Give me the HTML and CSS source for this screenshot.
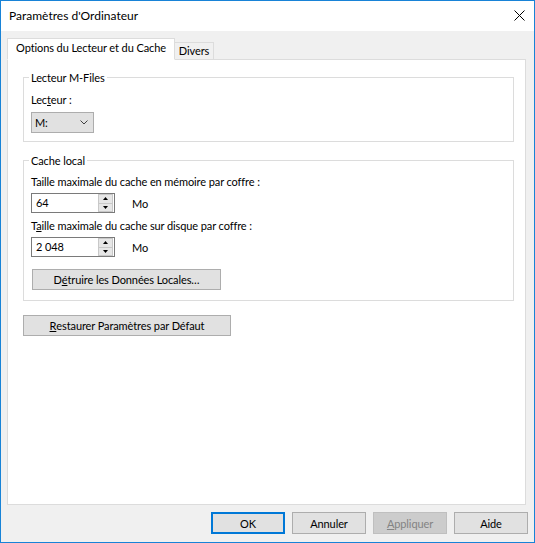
FILE: index.html
```html
<!DOCTYPE html>
<html lang="fr">
<head>
<meta charset="utf-8">
<title>Paramètres d'Ordinateur</title>
<link rel="stylesheet" href="styles.css">
</head>
<body>
<div class="window">
  <div class="titlebar">
    <span class="title">Paramètres d'Ordinateur</span>
    <svg class="close" width="11" height="11" viewBox="0 0 11 11"><path d="M0.5 0.5L10.5 10.5M10.5 0.5L0.5 10.5" stroke="#000" stroke-width="1" fill="none"/></svg>
  </div>
  <div class="body">
    <div class="tabs">
      <div class="tab active">Options du Lecteur et du Cache</div>
      <div class="tab">Divers</div>
    </div>
    <div class="panel">
      <fieldset class="group g1">
        <legend>Lecteur M-Files</legend>
        <div class="label">Lec<u>t</u>eur :</div>
        <div class="combo"><span>M:</span><svg class="chev" width="8" height="5" viewBox="0 0 8 5"><path d="M0.5 0.5L4 4L7.5 0.5" stroke="#404040" stroke-width="1" fill="none"/></svg></div>
      </fieldset>
      <fieldset class="group g2">
        <legend>Cache local</legend>
        <div class="label">Taille maximale du cache en mémoire par coffre :</div>
        <div class="spinrow">
          <div class="spin"><span class="val">64</span><div class="spinbtns"><div class="sb"><svg width="5" height="3" viewBox="0 0 5 3"><polygon points="2.5,0 5,3 0,3" fill="#000"/></svg></div><div class="sb"><svg width="5" height="3" viewBox="0 0 5 3"><polygon points="0,0 5,0 2.5,3" fill="#000"/></svg></div></div></div>
          <span class="unit">Mo</span>
        </div>
        <div class="label second">T<u>a</u>ille maximale du cache sur disque par coffre :</div>
        <div class="spinrow">
          <div class="spin"><span class="val">2 048</span><div class="spinbtns"><div class="sb"><svg width="5" height="3" viewBox="0 0 5 3"><polygon points="2.5,0 5,3 0,3" fill="#000"/></svg></div><div class="sb"><svg width="5" height="3" viewBox="0 0 5 3"><polygon points="0,0 5,0 2.5,3" fill="#000"/></svg></div></div></div>
          <span class="unit">Mo</span>
        </div>
        <button class="btn destroy">D<u>é</u>truire les Données Locales…</button>
      </fieldset>
      <button class="btn restore"><u>R</u>estaurer Paramètres par Défaut</button>
    </div>
    <div class="footer">
      <button class="btn foot default">OK</button>
      <button class="btn foot">Annuler</button>
      <button class="btn foot disabled"><u>A</u>ppliquer</button>
      <button class="btn foot">Aide</button>
    </div>
  </div>
</div>
</body>
</html>
```

FILE: styles.css
```css
* { box-sizing: border-box; }
html, body { margin: 0; padding: 0; }
body {
  width: 535px;
  height: 543px;
  overflow: hidden;
  font-family: Lato, "Liberation Sans", sans-serif;
  font-size: 12px;
  font-weight: 400;
  line-height: 15px;
  color: #000;
}
.window {
  width: 535px;
  height: 543px;
  border: 1px solid #1883d7;
  background: #f0f0f0;
  display: flex;
  flex-direction: column;
}
.titlebar {
  height: 30px;
  flex: none;
  background: #fff;
  display: flex;
  align-items: flex-start;
  padding-left: 8px;
}
.title { margin-top: 7px; }
.close { margin-left: auto; margin-right: 9px; margin-top: 9px; }
.body {
  flex: 1;
  display: flex;
  flex-direction: column;
  padding: 7px 0 0 6px;
  min-height: 0;
  font-size: 11px;
  letter-spacing: -0.1px;
}
.tabs {
  display: flex;
  align-items: flex-end;
  height: 22px;
  flex: none;
  margin-bottom: -1px;
  position: relative;
  z-index: 1;
}
.tab {
  border: 1px solid #dcdcdc;
  background: #f0f0f0;
  height: 18px;
  width: 40px;
  margin-left: -1px;
  text-align: center;
  line-height: 15px;
  white-space: nowrap;
}
.tab.active {
  background: #fff;
  border-bottom-color: #fff;
  height: 22px;
  width: 168px;
  margin-left: 0;
  padding-top: 1px;
  position: relative;
  z-index: 1;
}
.panel {
  flex: 1;
  min-height: 0;
  background: #fff;
  border: 1px solid #dcdcdc;
  margin-right: 8px;
  padding: 10px 11px 0 15px;
}
.group {
  margin: 0;
  min-width: 0;
  border: 1px solid #dcdcdc;
  padding: 7px 10px 8px 7px;
}
.group legend {
  padding: 0 2px;
  margin-left: -2px;
  line-height: 15px;
}
.g2 { margin-top: 11px; padding-top: 6px; padding-bottom: 10px; }
.label { line-height: 15px; }
.label.second { margin-top: 5px; }
u { text-decoration: underline; text-underline-offset: 1px; }
.combo {
  width: 63px;
  height: 21px;
  margin-top: 5px;
  background: #e1e1e1;
  border: 1px solid #adadad;
  display: flex;
  align-items: center;
  justify-content: space-between;
  padding: 0 5px 0 3px;
}
.chev { display: block; }
.spinrow { display: flex; align-items: center; margin-top: 4px; }
.spin {
  width: 84px;
  height: 20px;
  border: 1px solid #7a7a7a;
  background: #fff;
  display: flex;
}
.spin .val { flex: 1; padding-left: 4px; line-height: 18px; }
.spinbtns {
  width: 16px;
  display: flex;
  flex-direction: column;
  padding: 0 1px 0 0;
}
.sb {
  flex: 1;
  background: #e6e6e6;
  border: 1px solid #c8c8c8;
  display: flex;
  align-items: center;
  justify-content: center;
}
.sb + .sb { border-top: none; }
.sb svg { display: block; }
.unit { margin-left: 17px; }
.btn {
  font-family: inherit;
  font-size: inherit;
  font-weight: 400;
  letter-spacing: inherit;
  color: #000;
  background: #e1e1e1;
  border: 1px solid #adadad;
  padding: 0;
  height: 21px;
  display: flex;
  align-items: center;
  justify-content: center;
  border-radius: 0;
}
.destroy { margin-top: 12px; margin-left: 1px; width: 189px; }
.restore { margin-top: 14px; width: 208px; }
.footer {
  flex: none;
  display: flex;
  justify-content: flex-end;
  gap: 7px;
  padding: 7px 6px 8px 0;
}
.footer .btn { width: 74px; height: 22px; }
.btn.default { border: 2px solid #0078d7; }
.btn.disabled { background: #cccccc; border-color: #bfbfbf; color: #838383; }
```
